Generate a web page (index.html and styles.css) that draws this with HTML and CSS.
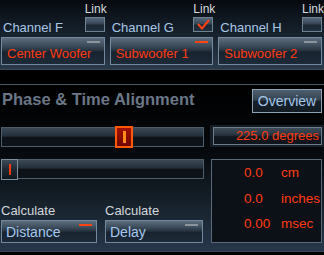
FILE: index.html
```html
<!DOCTYPE html>
<html lang="en">
<head>
    <meta charset="UTF-8">
    <meta name="viewport" content="width=device-width, initial-scale=1.0">
    <title>Phase &amp; Time Alignment</title>
    <link rel="stylesheet" href="styles.css">
</head>
<body>

<div class="top">
    <div class="channel">
        <div class="ch-head">
            <span class="ch-name">Channel F</span>
            <div class="link">
                <span class="link-label">Link</span>
                <span class="check"></span>
            </div>
        </div>
        <div class="box">
            <span class="red-text">Center Woofer</span>
            <span class="dash"></span>
        </div>
    </div>

    <div class="channel">
        <div class="ch-head">
            <span class="ch-name">Channel G</span>
            <div class="link">
                <span class="link-label">Link</span>
                <span class="check">
                    <svg width="18" height="13" viewBox="0 0 18 13">
                        <polyline points="4,6 8,10.5 15,2" fill="none" stroke="#ff4012" stroke-width="2"/>
                    </svg>
                </span>
            </div>
        </div>
        <div class="box">
            <span class="red-text">Subwoofer 1</span>
            <span class="dash dash-on"></span>
        </div>
    </div>

    <div class="channel">
        <div class="ch-head">
            <span class="ch-name">Channel H</span>
            <div class="link">
                <span class="link-label">Link</span>
                <span class="check"></span>
            </div>
        </div>
        <div class="box">
            <span class="red-text">Subwoofer 2</span>
            <span class="dash"></span>
        </div>
    </div>
</div>

<div class="spacer"></div>

<div class="main">
    <div class="title-row">
        <h2>Phase &amp; Time Alignment</h2>
        <button class="btn">Overview</button>
    </div>

    <div class="phase-row">
        <div class="track track-phase">
            <span class="thumb thumb-phase"></span>
        </div>
        <div class="readout">
            <div class="readout-inner">225.0 degrees</div>
        </div>
    </div>

    <div class="lower">
        <div class="left">
            <div class="track track-delay">
                <span class="thumb thumb-delay"></span>
            </div>
            <div class="calc-row">
                <div class="calc">
                    <div class="calc-label">Calculate</div>
                    <div class="box calc-box">
                        <span class="blue-text">Distance</span>
                        <span class="dash dash-on"></span>
                    </div>
                </div>
                <div class="calc">
                    <div class="calc-label">Calculate</div>
                    <div class="box calc-box">
                        <span class="blue-text">Delay</span>
                        <span class="dash"></span>
                    </div>
                </div>
            </div>
        </div>

        <div class="panel">
            <span class="num">0.0</span><span class="unit">cm</span>
            <span class="num">0.0</span><span class="unit">inches</span>
            <span class="num">0.00</span><span class="unit">msec</span>
        </div>
    </div>
</div>

<div class="bottom"></div>

</body>
</html>
```

FILE: styles.css
```css
body {
    margin: 0;
    background-color: #000;
    font-family: "Liberation Sans", Arial, sans-serif;
    width: 324px;
    height: 255px;
    overflow: hidden;
}

/* channel strip */
.top {
    height: 69px;
    border-bottom: 1px solid #3c4957;
    background: linear-gradient(to bottom, #060a0f 0%, #16202b 45%, #2b3a4b 100%);
    display: grid;
    grid-template-columns: repeat(3, 1fr);
    column-gap: 5px;
    padding: 0 2px 0 1px;
}

.ch-head {
    display: flex;
    justify-content: space-between;
    height: 37px;
}

.ch-name {
    padding: 20px 0 0 2px;
    font-size: 13px;
    line-height: 15px;
    color: #a9c8e6;
}

.link {
    display: flex;
    flex-direction: column;
    align-items: center;
    padding-top: 2px;
}

.link-label {
    font-size: 12px;
    line-height: 14px;
    color: #d6dadd;
    margin-right: -2px;
}

.check {
    width: 18px;
    height: 13px;
    margin-top: 1px;
    border: 1px solid #6f8292;
    background: linear-gradient(to bottom, #56677a 0%, #354453 48%, #1b2733 52%, #223040 100%);
}

.check svg {
    display: block;
}

.box {
    position: relative;
    height: 23px;
    padding: 3px 0 0 5px;
    border: 1px solid #7289a0;
    background: linear-gradient(to bottom, #5d6d7d 0%, #3d4c5b 30%, #27333f 48%, #18232f 54%, #1d2a38 100%);
    line-height: 23px;
    white-space: nowrap;
}

.red-text {
    font-size: 13px;
    color: #ff3b12;
}

.blue-text {
    font-size: 14px;
    color: #a3c9f0;
}

.dash {
    position: absolute;
    top: 3px;
    right: 4px;
    width: 13px;
    height: 2px;
    background-color: #8c959c;
}

.dash-on {
    background-color: #ff4414;
}

.spacer {
    height: 14px;
    border-bottom: 1px solid #4e565e;
}

/* alignment section */
.main {
    height: 162px;
    padding: 4px 0 0 1px;
    background: linear-gradient(to bottom, #000 0%, #06090d 40%, #152029 70%, #27374a 100%);
}

.title-row {
    display: flex;
    justify-content: space-between;
    height: 24px;
}

.title-row h2 {
    margin: 0 0 0 1px;
    font-size: 16.5px;
    line-height: 20px;
    color: #6b7787;
}

.btn {
    width: 70px;
    height: 24px;
    margin-right: 2px;
    padding: 1px 0 0 0;
    border: 1px solid #8da1b3;
    background: linear-gradient(to bottom, #4e5f70 0%, #33424f 45%, #16202a 52%, #131c25 100%);
    font-family: "Liberation Sans", Arial, sans-serif;
    font-size: 14px;
    line-height: 21px;
    color: #a4c7ea;
}

.phase-row {
    display: grid;
    grid-template-columns: 203px 1fr;
    column-gap: 6px;
    margin-top: 12px;
}

.track {
    position: relative;
    height: 18px;
    border: 1px solid #4d5e6b;
    background: linear-gradient(to bottom, #3b4956 0%, #26323d 40%, #172028 50%, #0c1217 52%, #0d1318 100%);
}

.track-phase {
    margin-top: 2px;
}

.thumb {
    position: absolute;
}

.thumb::after {
    content: "";
    position: absolute;
    width: 3px;
    left: 50%;
    margin-left: -1.5px;
}

.thumb-phase {
    left: 113px;
    top: -2px;
    width: 14px;
    height: 18px;
    border: 2px solid #ff5a0a;
    background: linear-gradient(to bottom, #a11000 0%, #6e0700 100%);
}

.thumb-phase::after {
    top: 3px;
    height: 12px;
    background-color: #ff8a1a;
}

.thumb-delay {
    left: -1px;
    top: -1px;
    width: 15px;
    height: 19px;
    border: 1px solid #7d8e9c;
    background: linear-gradient(to bottom, #3b4957 0%, #1e2833 50%, #10171e 100%);
}

.thumb-delay::after {
    width: 2px;
    margin-left: -1px;
    top: 4px;
    height: 11px;
    background-color: #ff3a10;
}

.readout {
    height: 18px;
    padding: 2px 2px 2px 3px;
    background-color: #161d24;
}

.readout-inner {
    height: 16px;
    padding-right: 2px;
    border: 1px solid #6b7c8a;
    background: linear-gradient(to bottom, #3f4d5a 0%, #26313c 45%, #10171e 55%, #0e151c 100%);
    text-align: right;
    font-size: 13px;
    line-height: 16px;
    color: #ff3b12;
}

.lower {
    display: grid;
    grid-template-columns: 203px 111px;
    column-gap: 7px;
    margin-top: 12px;
}

.calc-row {
    display: grid;
    grid-template-columns: 96px 98px;
    column-gap: 8px;
    margin-top: 24px;
}

.calc-label {
    font-size: 13px;
    line-height: 15px;
    color: #d3d7db;
    margin-bottom: 2px;
}

.calc-box {
    height: 21px;
    padding: 0 0 0 4px;
    line-height: 21px;
}

.panel {
    height: 82px;
    border: 1px solid #59697a;
    background-color: #0c1117;
    display: grid;
    grid-template-columns: 37px 1fr;
    grid-auto-rows: 25.5px;
    padding-left: 32px;
    font-size: 13.5px;
    line-height: 25.5px;
    color: #ff3b12;
}

.bottom {
    border-top: 1px solid #3a4553;
    height: 4px;
    background-color: #000;
}
```
